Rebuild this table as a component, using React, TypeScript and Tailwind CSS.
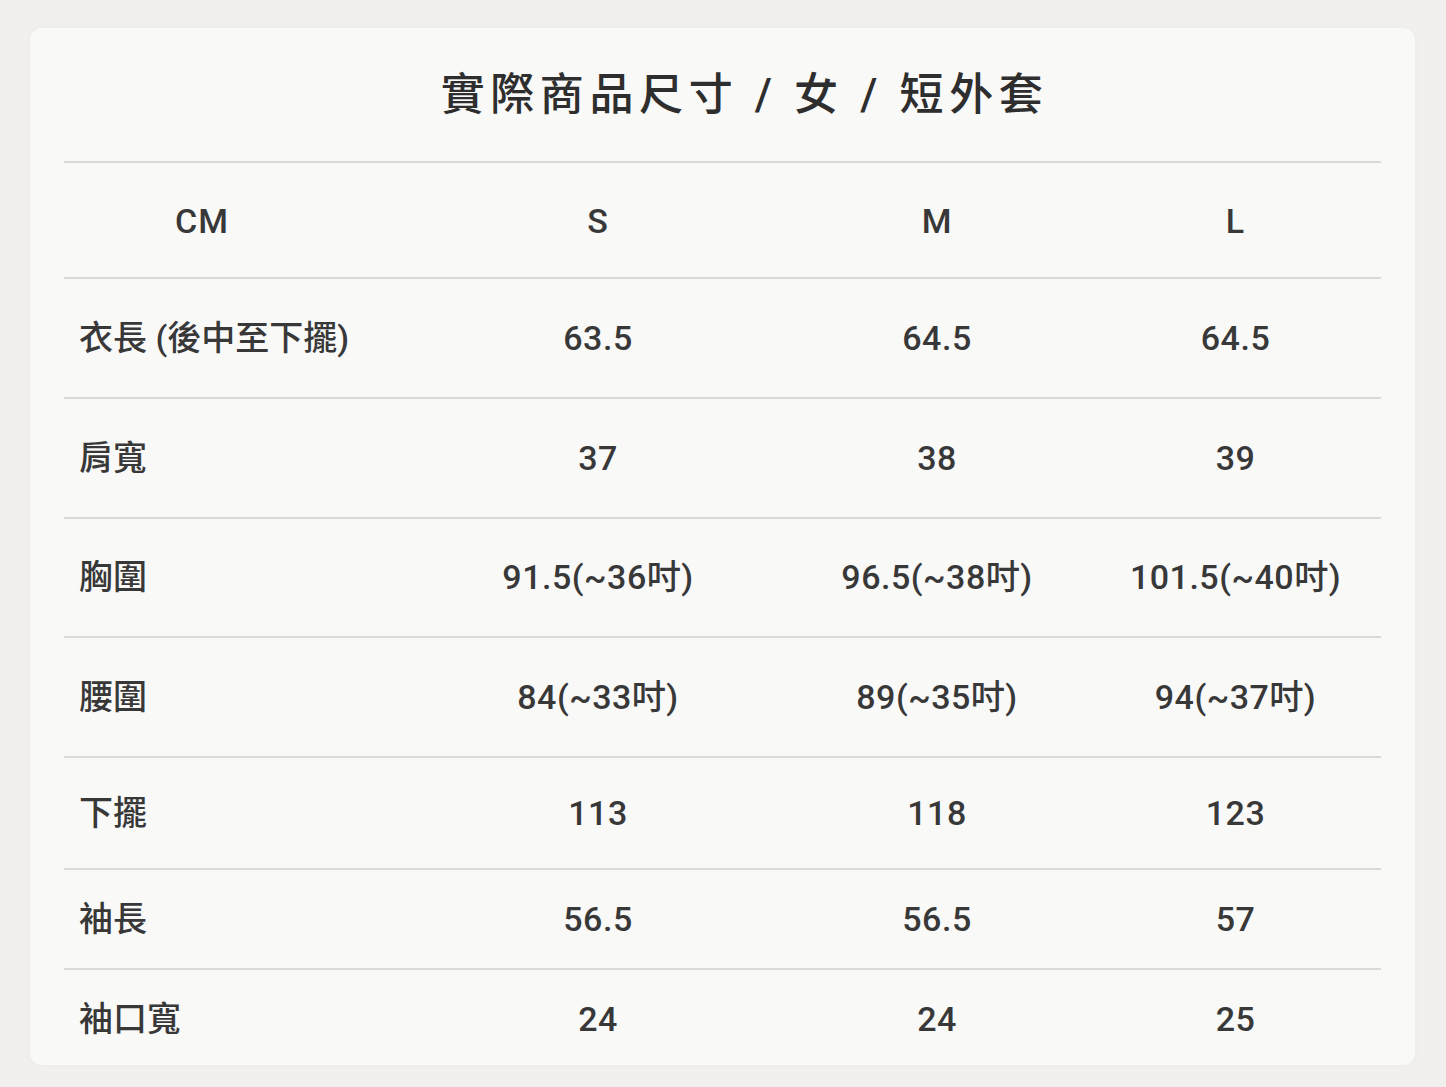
import React from "react";

const rows: [string, string, string, string, string][] = [
  ["衣長 (後中至下擺)", "63.5", "64.5", "64.5", "h-[120px]"],
  ["肩寬", "37", "38", "39", "h-[120px]"],
  ["胸圍", "91.5(~36吋)", "96.5(~38吋)", "101.5(~40吋)", "h-[119px]"],
  ["腰圍", "84(~33吋)", "89(~35吋)", "94(~37吋)", "h-[120px]"],
  ["下擺", "113", "118", "123", "h-[112px]"],
  ["袖長", "56.5", "56.5", "57", "h-[100px]"],
  ["袖口寬", "24", "24", "25", "h-[97px] pt-[4px]"],
];

const font = {
  fontFamily: 'Roboto, "Noto Sans CJK TC", "Noto Sans", sans-serif',
};

export default function App() {
  return (
    <div className="min-h-screen w-full bg-[#f1f0ef] pt-[28px] pl-[30px] pr-[31px] pb-[22px]" style={font}>
      <div className="h-[1037px] rounded-[12px] bg-[#f9f9f8] px-[34px] shadow-[0_0_6px_rgba(0,0,0,0.03)] text-[#383838]">
        <div className="flex h-[133px] items-center justify-center pl-[44px] text-[44px] font-medium tracking-[5.6px] text-[#2e2e2e]">
          實際商品尺寸 / 女 / 短外套
        </div>
        <div className="grid h-[116px] grid-cols-[348px_372px_306px_291px] items-center border-t-2 border-[#dadada] pt-[2px] text-[34px] font-medium tracking-[1px]">
          <div className="pl-[111px]">CM</div>
          <div className="text-center">S</div>
          <div className="text-center">M</div>
          <div className="text-center">L</div>
        </div>
        {rows.map(([label, s, m, l, h]) => (
          <div
            key={label}
            className={`grid ${h} grid-cols-[348px_372px_306px_291px] items-center border-t-2 border-[#dadada] text-[34px] font-medium tracking-[0.5px]`}
          >
            <div className="whitespace-nowrap pl-[15px] tracking-[0px]">{label}</div>
            <div className="whitespace-nowrap text-center">{s}</div>
            <div className="whitespace-nowrap text-center">{m}</div>
            <div className="whitespace-nowrap text-center">{l}</div>
          </div>
        ))}
      </div>
    </div>
  );
}
